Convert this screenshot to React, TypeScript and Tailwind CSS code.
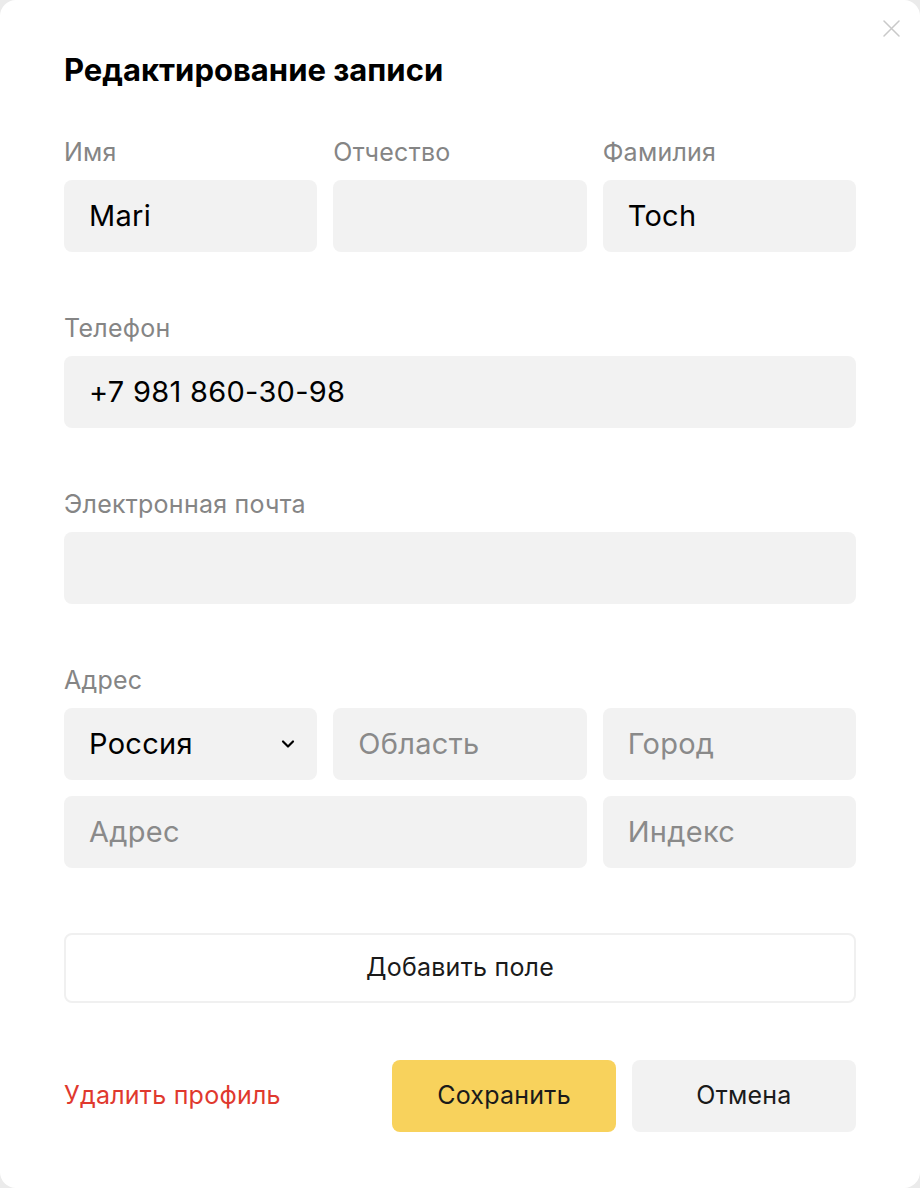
import { ChevronDown } from "lucide-react";

function Field({ label, value, className }: { label?: string; value?: string; className?: string }) {
  return (
    <div className={className}>
      {label && <div className="text-[25px] leading-[28px] tracking-[0.01em] text-[#858585] mb-[14px]">{label}</div>}
      <div className="h-[72px] rounded-lg bg-[#f2f2f2] flex items-center px-[25px] text-[29px] tracking-[0.01em] text-black">
        {value}
      </div>
    </div>
  );
}

function Placeholder({ text, className }: { text: string; className?: string }) {
  return (
    <div className={"h-[72px] rounded-lg bg-[#f2f2f2] flex items-center px-[25px] text-[29px] tracking-[0.01em] text-[#8a8a8a] " + (className ?? "")}>
      {text}
    </div>
  );
}

export default function App() {
  return (
    <div className="min-h-[1188px] bg-[#ebebeb]" style={{ fontFamily: "Inter, 'Noto Sans', sans-serif" }}>
      <div className="relative h-[1188px] w-[920px] rounded-2xl bg-white px-16 pt-[52px]">
        {/* close */}
        <button className="absolute left-[883px] top-[20px]">
          <svg width="17" height="17" viewBox="0 0 17 17" fill="none" stroke="#c9c9c9" strokeWidth="1.5" strokeLinecap="round">
            <path d="M1 1l15 15M16 1L1 16" />
          </svg>
        </button>

        <h1 className="text-[31px] leading-[36px] font-bold text-black">Редактирование записи</h1>

        {/* name row */}
        <div className="grid grid-cols-3 gap-4 mt-[50px]">
          <Field label="Имя" value="Mari" />
          <Field label="Отчество" />
          <Field label="Фамилия" value="Toch" />
        </div>

        <Field label="Телефон" value="+7 981 860-30-98" className="mt-[62px]" />
        <Field label="Электронная почта" className="mt-[62px]" />

        {/* address */}
        <div className="mt-[62px]">
          <div className="text-[25px] leading-[28px] tracking-[0.01em] text-[#858585] mb-[14px]">Адрес</div>
          <div className="grid grid-cols-3 gap-4">
            <div className="h-[72px] rounded-lg bg-[#f2f2f2] flex items-center justify-between pl-[25px] pr-[19px] text-[29px] tracking-[0.01em] text-black">
              Россия
              <ChevronDown className="w-[20px] h-[20px]" strokeWidth={2.6} />
            </div>
            <Placeholder text="Область" />
            <Placeholder text="Город" />
            <Placeholder text="Адрес" className="col-span-2" />
            <Placeholder text="Индекс" />
          </div>
        </div>

        <button className="mt-[65px] w-full h-[70px] rounded-lg border-2 border-[#f0f0f0] bg-white text-[25px] tracking-[0.01em] text-[#1a1a1a]">
          Добавить поле
        </button>

        {/* footer */}
        <div className="mt-[57px] flex items-center">
          <span className="text-[25px] tracking-[0.01em] text-[#e0392e]">Удалить профиль</span>
          <div className="ml-auto flex gap-4">
            <button className="w-[224px] h-[72px] rounded-lg bg-[#f8d25c] text-[25px] tracking-[0.01em] text-[#1a1a1a]">Сохранить</button>
            <button className="w-[224px] h-[72px] rounded-lg bg-[#f2f2f2] text-[25px] tracking-[0.01em] text-[#1a1a1a]">Отмена</button>
          </div>
        </div>
      </div>
    </div>
  );
}
